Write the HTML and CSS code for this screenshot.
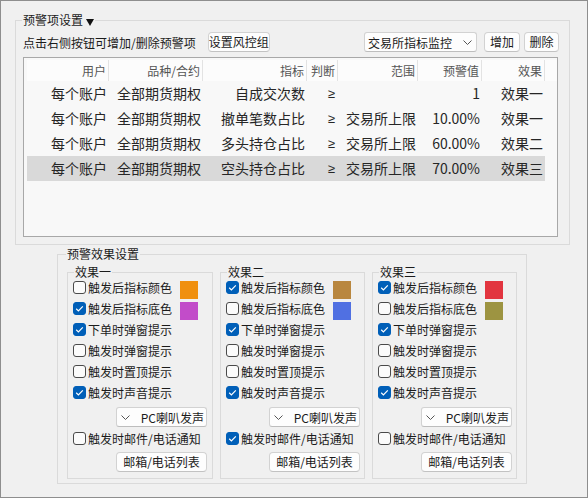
FILE: index.html
```html
<!DOCTYPE html>
<html lang="zh-CN">
  <head>
    <meta charset="UTF-8" />
    <title>预警项设置</title>
    <link rel="stylesheet" href="styles.css">
  </head>
  <body>
    <div class="win">
      <fieldset class="group top">
        <legend>预警项设置<svg class="tri" width="8" height="7" viewBox="0 0 8 7"><polygon points="0,0 8,0 4,7" fill="#111"/></svg></legend>
        <div class="toolbar">
          <span class="hint">点击右侧按钮可增加/删除预警项</span>
          <span class="btn btn-group">设置风控组</span>
          <span class="fill"></span>
          <span class="combo combo-src">交易所指标监控<svg class="chev" width="9" height="5" viewBox="0 0 9 5"><polyline points="0.5,0.5 4.5,4.5 8.5,0.5" fill="none" stroke="#555" stroke-width="1"/></svg></span>
          <span class="btn btn-add">增加</span>
          <span class="btn btn-del">删除</span>
        </div>
        <div class="list">
          <div class="row head">
            <span>用户</span><span>品种/合约</span><span>指标</span><span>判断</span><span>范围</span><span>预警值</span><span>效果</span>
          </div>
          <div class="row">
            <span>每个账户</span><span>全部期货期权</span><span>自成交次数</span><span class="ge">≥</span><span></span><span>1</span><span>效果一</span>
          </div>
          <div class="row">
            <span>每个账户</span><span>全部期货期权</span><span>撤单笔数占比</span><span class="ge">≥</span><span>交易所上限</span><span>10.00%</span><span>效果一</span>
          </div>
          <div class="row">
            <span>每个账户</span><span>全部期货期权</span><span>多头持仓占比</span><span class="ge">≥</span><span>交易所上限</span><span>60.00%</span><span>效果二</span>
          </div>
          <div class="row selected">
            <span>每个账户</span><span>全部期货期权</span><span>空头持仓占比</span><span class="ge">≥</span><span>交易所上限</span><span>70.00%</span><span>效果三</span>
          </div>
        </div>
      </fieldset>

      <fieldset class="group effects">
        <legend>预警效果设置</legend>
        <div class="effect-cols">
          <fieldset class="effect">
            <legend>效果一</legend>
            <div class="opts">
              <div class="opt"><span class="cb"></span>触发后指标颜色<span class="swatch sw-orange"></span></div>
              <div class="opt"><span class="cb on"><svg width="13" height="13" viewBox="0 0 13 13"><polyline points="3.2,6.8 5.4,8.9 9.8,4.3" fill="none" stroke="#fff" stroke-width="1.2"/></svg></span>触发后指标底色<span class="swatch sw-purple"></span></div>
              <div class="opt"><span class="cb on"><svg width="13" height="13" viewBox="0 0 13 13"><polyline points="3.2,6.8 5.4,8.9 9.8,4.3" fill="none" stroke="#fff" stroke-width="1.2"/></svg></span>下单时弹窗提示</div>
              <div class="opt"><span class="cb"></span>触发时弹窗提示</div>
              <div class="opt"><span class="cb"></span>触发时置顶提示</div>
              <div class="opt"><span class="cb on"><svg width="13" height="13" viewBox="0 0 13 13"><polyline points="3.2,6.8 5.4,8.9 9.8,4.3" fill="none" stroke="#fff" stroke-width="1.2"/></svg></span>触发时声音提示</div>
            </div>
            <div class="combo combo-sound"><svg class="chev" width="9" height="5" viewBox="0 0 9 5"><polyline points="0.5,0.5 4.5,4.5 8.5,0.5" fill="none" stroke="#555" stroke-width="1"/></svg><span>PC喇叭发声</span></div>
            <div class="opt opt-mail"><span class="cb"></span>触发时邮件/电话通知</div>
            <div class="btn btn-list">邮箱/电话列表</div>
          </fieldset>

          <fieldset class="effect">
            <legend>效果二</legend>
            <div class="opts">
              <div class="opt"><span class="cb on"><svg width="13" height="13" viewBox="0 0 13 13"><polyline points="3.2,6.8 5.4,8.9 9.8,4.3" fill="none" stroke="#fff" stroke-width="1.2"/></svg></span>触发后指标颜色<span class="swatch sw-brown"></span></div>
              <div class="opt"><span class="cb"></span>触发后指标底色<span class="swatch sw-blue"></span></div>
              <div class="opt"><span class="cb on"><svg width="13" height="13" viewBox="0 0 13 13"><polyline points="3.2,6.8 5.4,8.9 9.8,4.3" fill="none" stroke="#fff" stroke-width="1.2"/></svg></span>下单时弹窗提示</div>
              <div class="opt"><span class="cb"></span>触发时弹窗提示</div>
              <div class="opt"><span class="cb"></span>触发时置顶提示</div>
              <div class="opt"><span class="cb on"><svg width="13" height="13" viewBox="0 0 13 13"><polyline points="3.2,6.8 5.4,8.9 9.8,4.3" fill="none" stroke="#fff" stroke-width="1.2"/></svg></span>触发时声音提示</div>
            </div>
            <div class="combo combo-sound"><svg class="chev" width="9" height="5" viewBox="0 0 9 5"><polyline points="0.5,0.5 4.5,4.5 8.5,0.5" fill="none" stroke="#555" stroke-width="1"/></svg><span>PC喇叭发声</span></div>
            <div class="opt opt-mail"><span class="cb on"><svg width="13" height="13" viewBox="0 0 13 13"><polyline points="3.2,6.8 5.4,8.9 9.8,4.3" fill="none" stroke="#fff" stroke-width="1.2"/></svg></span>触发时邮件/电话通知</div>
            <div class="btn btn-list">邮箱/电话列表</div>
          </fieldset>

          <fieldset class="effect">
            <legend>效果三</legend>
            <div class="opts">
              <div class="opt"><span class="cb on"><svg width="13" height="13" viewBox="0 0 13 13"><polyline points="3.2,6.8 5.4,8.9 9.8,4.3" fill="none" stroke="#fff" stroke-width="1.2"/></svg></span>触发后指标颜色<span class="swatch sw-red"></span></div>
              <div class="opt"><span class="cb"></span>触发后指标底色<span class="swatch sw-olive"></span></div>
              <div class="opt"><span class="cb on"><svg width="13" height="13" viewBox="0 0 13 13"><polyline points="3.2,6.8 5.4,8.9 9.8,4.3" fill="none" stroke="#fff" stroke-width="1.2"/></svg></span>下单时弹窗提示</div>
              <div class="opt"><span class="cb"></span>触发时弹窗提示</div>
              <div class="opt"><span class="cb"></span>触发时置顶提示</div>
              <div class="opt"><span class="cb on"><svg width="13" height="13" viewBox="0 0 13 13"><polyline points="3.2,6.8 5.4,8.9 9.8,4.3" fill="none" stroke="#fff" stroke-width="1.2"/></svg></span>触发时声音提示</div>
            </div>
            <div class="combo combo-sound"><svg class="chev" width="9" height="5" viewBox="0 0 9 5"><polyline points="0.5,0.5 4.5,4.5 8.5,0.5" fill="none" stroke="#555" stroke-width="1"/></svg><span>PC喇叭发声</span></div>
            <div class="opt opt-mail"><span class="cb"></span>触发时邮件/电话通知</div>
            <div class="btn btn-list">邮箱/电话列表</div>
          </fieldset>
        </div>
      </fieldset>
    </div>
  </body>
</html>
```

FILE: styles.css
```css
* {
  margin: 0;
  padding: 0;
  box-sizing: border-box;
}
body {
  font-family: "Noto Sans CJK SC", "Microsoft YaHei", sans-serif;
  font-size: 12px;
  color: #1b1b1b;
  background: #f0f0f0;
}
.win {
  width: 588px;
  height: 498px;
  border: 1px solid #8e8e8e;
  background: #f0f0f0;
  overflow: hidden;
}
fieldset {
  border: 1px solid #dadada;
  min-width: 0;
}
legend {
  font-size: 12px;
  line-height: 14px;
  padding: 0 1px;
  margin-left: -1px;
}
.tri {
  margin-left: 3px;
  vertical-align: -1px;
}

/* top group */
.top {
  margin: 12px 0 0 14px;
  width: 555px;
  height: 232px;
  padding: 5px 10px 0 7px;
}
.toolbar {
  display: flex;
  align-items: center;
  height: 20px;
}
.fill {
  flex: 1;
}
.btn {
  display: flex;
  align-items: center;
  justify-content: center;
  height: 20px;
  background: #fdfdfd;
  border: 1px solid #d2d2d2;
  border-bottom-color: #c2c2c2;
  border-radius: 4px;
  line-height: 18px;
}
.btn-group {
  margin-left: 12px;
  width: 62px;
}
.btn-add {
  margin-left: 7px;
  width: 36px;
}
.btn-del {
  margin-left: 4px;
  width: 35px;
}
.combo {
  display: flex;
  align-items: center;
  height: 20px;
  background: #fdfdfd;
  border: 1px solid #d2d2d2;
  border-bottom-color: #bdbdbd;
  border-radius: 3px;
}
.combo-src {
  width: 113px;
  padding: 0 4px 0 3px;
  justify-content: space-between;
}

/* list view */
.list {
  margin-top: 5px;
  width: 535px;
  height: 180px;
  border: 1px solid #a8a8a8;
  padding: 2px 0 0 3px;
  background: #f8f8f8;
}
.row {
  display: grid;
  grid-template-columns: 82px 94px 104px 31px 80px 64px 63px;
  width: 518px;
  height: 25px;
  font-size: 14px;
  line-height: 25px;
  color: #262626;
}
.row span {
  text-align: right;
  padding-right: 2px;
  white-space: nowrap;
}
.row .ge {
  font-family: "Liberation Sans", sans-serif;
  font-size: 13px;
  padding-right: 3px;
}
.row.head {
  width: auto;
  height: 21px;
  font-size: 12px;
  line-height: 21px;
  color: #555;
  background: #fcfcfc;
}
.row.head span {
  border-right: 1px solid #e3e3e3;
  padding-right: 2px;
}
.row.selected {
  background: #d9d9d9;
}

/* effects group */
.effects {
  margin: 2px 0 0 56px;
  width: 470px;
  height: 237px;
  padding: 4px 0 0 9px;
}
.effect-cols {
  display: grid;
  grid-template-columns: 146px 145px 145px;
  column-gap: 7px;
}
.effect {
  height: 214px;
  padding: 0 0 0 5px;
}
.effect legend {
  margin-left: 1px;
}
.opts {
  margin-top: -2px;
}
.opt {
  display: flex;
  align-items: center;
  height: 21px;
  white-space: nowrap;
}
.cb {
  width: 13px;
  height: 13px;
  margin-right: 2px;
  border: 1px solid #4a4a4a;
  border-radius: 3px;
  background: #fbfbfb;
  flex: none;
}
.cb svg {
  display: block;
  margin: -1px;
}
.cb.on {
  background: #005fb8;
  border-color: #005fb8;
}
.swatch {
  width: 18px;
  height: 18px;
  margin: 4px 0 0 8px;
  flex: none;
}
.sw-orange { background: #f0900f; }
.sw-purple { background: #c24cc9; }
.sw-brown { background: #b9873f; }
.sw-blue { background: #5070e2; }
.sw-red { background: #e2353f; }
.sw-olive { background: #9d9441; }

.combo-sound {
  margin: 4px 0 0 43px;
  width: 91px;
  padding: 0 2px 0 4px;
  justify-content: space-between;
}
.opt-mail {
  margin-top: 1px;
}
.btn-list {
  margin: 3px 0 0 43px;
  width: 91px;
}
```
